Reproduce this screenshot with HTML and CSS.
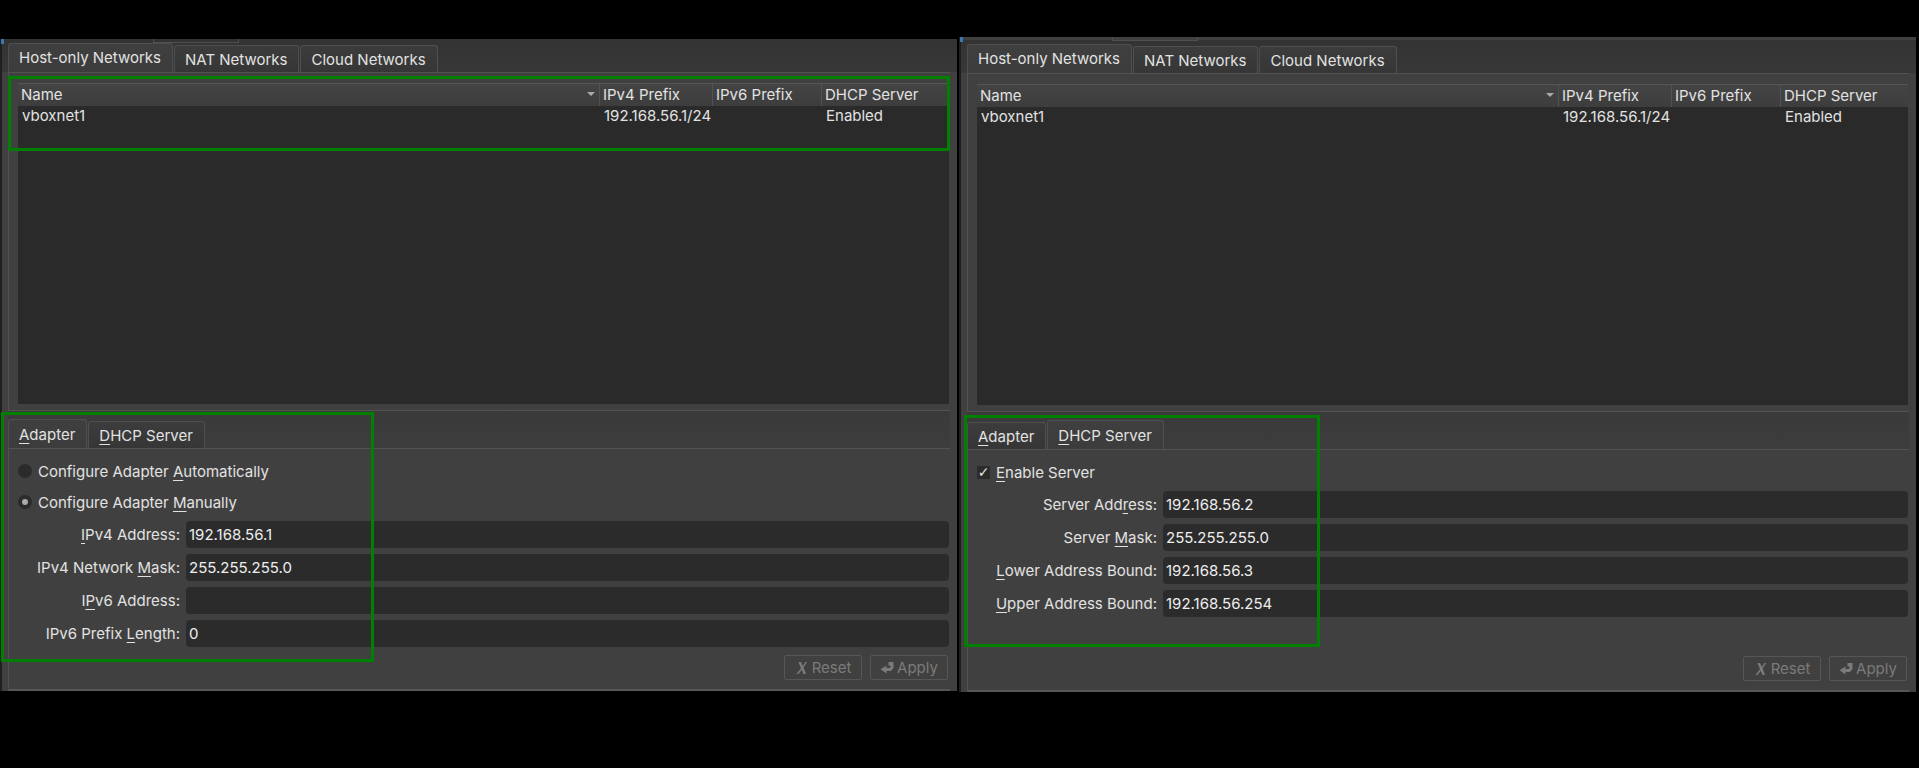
FILE: index.html
```html
<!DOCTYPE html>
<html lang="en">
<head>
<meta charset="utf-8">
<title>Host Network Manager</title>
<link rel="stylesheet" href="styles.css">
</head>
<body>
<main class="desktop">
  <section class="window window-left">
    <div class="top-pane">
      <div class="tabs">
        <div class="tab active">Host-only Networks</div>
        <div class="tab">NAT Networks</div>
        <div class="tab">Cloud Networks</div>
      </div>
      <div class="frame top-frame">
        <div class="table">
          <div class="thead">
            <div class="th th-name">Name<span class="sort"></span></div>
            <div class="th">IPv4 Prefix</div>
            <div class="th">IPv6 Prefix</div>
            <div class="th">DHCP Server</div>
          </div>
          <div class="tr">
            <div class="td">vboxnet1</div>
            <div class="td">192.168.56.1/24</div>
            <div class="td"></div>
            <div class="td">Enabled</div>
          </div>
        </div>
      </div>
    </div>
    <div class="bottom-pane">
      <div class="tabs">
        <div class="tab active"><u>A</u>dapter</div>
        <div class="tab"><u>D</u>HCP Server</div>
      </div>
      <div class="frame bottom-frame">
        <div class="choices">
          <div class="choice"><span class="radio"></span><span>Configure Adapter <u>A</u>utomatically</span></div>
          <div class="choice"><span class="radio checked"></span><span>Configure Adapter <u>M</u>anually</span></div>
        </div>
        <div class="form form-adapter">
          <label class="lbl"><u>I</u>Pv4 Address:</label><div class="input">192.168.56.1</div>
          <label class="lbl">IPv4 Network <u>M</u>ask:</label><div class="input">255.255.255.0</div>
          <label class="lbl">I<u>P</u>v6 Address:</label><div class="input"></div>
          <label class="lbl">IPv6 Prefix <u>L</u>ength:</label><div class="input">0</div>
        </div>
        <div class="actions">
          <div class="btn"><svg class="ico" viewBox="0 0 14 14"><path d="M3.500 1h2.500l1.800 4 2.700-4h1.700L8.500 6.300 11 13H8.400L6.800 8.700 3.400 13H1.500L6 7.300Z"/></svg>Reset</div>
          <div class="btn"><svg class="ico" viewBox="0 0 14 14"><path d="M8.500 1H13.500V7L11 10H6.500V12.500L.5 8.300 6.500 4.500V7H9.500L10.500 6V4.500H8.500Z"/></svg>Apply</div>
        </div>
      </div>
    </div>
    <div class="corner"></div>
    <div class="ghost-tab"></div>
    <div class="mark mark-table"></div>
    <div class="mark mark-adapter"></div>
  </section>

  <section class="window window-right">
    <div class="top-pane">
      <div class="tabs">
        <div class="tab active">Host-only Networks</div>
        <div class="tab">NAT Networks</div>
        <div class="tab">Cloud Networks</div>
      </div>
      <div class="frame top-frame">
        <div class="table">
          <div class="thead">
            <div class="th th-name">Name<span class="sort"></span></div>
            <div class="th">IPv4 Prefix</div>
            <div class="th">IPv6 Prefix</div>
            <div class="th">DHCP Server</div>
          </div>
          <div class="tr">
            <div class="td">vboxnet1</div>
            <div class="td">192.168.56.1/24</div>
            <div class="td"></div>
            <div class="td">Enabled</div>
          </div>
        </div>
      </div>
    </div>
    <div class="bottom-pane">
      <div class="tabs">
        <div class="tab"><u>A</u>dapter</div>
        <div class="tab active"><u>D</u>HCP Server</div>
      </div>
      <div class="frame bottom-frame">
        <div class="choices">
          <div class="choice"><span class="check">✓</span><span><u>E</u>nable Server</span></div>
        </div>
        <div class="form form-dhcp">
          <label class="lbl">Server Add<u>r</u>ess:</label><div class="input">192.168.56.2</div>
          <label class="lbl">Server <u>M</u>ask:</label><div class="input">255.255.255.0</div>
          <label class="lbl"><u>L</u>ower Address Bound:</label><div class="input">192.168.56.3</div>
          <label class="lbl"><u>U</u>pper Address Bound:</label><div class="input">192.168.56.254</div>
        </div>
        <div class="actions">
          <div class="btn"><svg class="ico" viewBox="0 0 14 14"><path d="M3.500 1h2.500l1.800 4 2.700-4h1.700L8.500 6.300 11 13H8.400L6.800 8.700 3.400 13H1.500L6 7.300Z"/></svg>Reset</div>
          <div class="btn"><svg class="ico" viewBox="0 0 14 14"><path d="M8.500 1H13.500V7L11 10H6.500V12.500L.5 8.300 6.500 4.500V7H9.500L10.500 6V4.500H8.500Z"/></svg>Apply</div>
        </div>
      </div>
    </div>
    <div class="corner"></div>
    <div class="ghost-tab"></div>
    <div class="mark mark-dhcp"></div>
  </section>
</main>
</body>
</html>
```
FILE: styles.css
```css
* { box-sizing: border-box; }
html, body { margin: 0; height: 768px; background: #000; overflow: hidden; }
body { font-family: Inter, "Noto Sans", sans-serif; font-size: 15px; color: #e2e2e2; }
u { text-underline-offset: 3px; text-decoration-thickness: 1px; }

.desktop { display: flex; gap: 2px; align-items: flex-start; padding-top: 39px; }
.window { position: relative; width: 957px; height: 652px; background: #404040; padding-left: 6px; padding-right: 7px; display: flex; flex-direction: column; border-left: 2px solid #1f1f1f; }
.window-right { margin-top: -2px; height: 655px; padding-top: 3px; }

.top-pane { height: 372px; display: flex; flex-direction: column; padding-top: 4px; background: linear-gradient(#333, #383838 33px, transparent 33px); margin: 0 -7px 0 -6px; padding-left: 6px; padding-right: 7px; }
.bottom-pane { flex: 1; display: flex; flex-direction: column; padding-top: 8px; background: linear-gradient(#3a3a3a, #3d3d3d 37px, transparent 37px); }

.tabs { display: flex; height: 29px; align-items: flex-end; gap: 1px; }
.tab { height: 27px; padding: 0 11px 0 10px; display: flex; align-items: center; background: linear-gradient(#3c3c3c, #363636); border: 1px solid #4f4f4f; border-bottom: 0; border-radius: 3px 3px 0 0; white-space: pre; }
.tab.active { height: 29px; background: linear-gradient(#3f3f3f, #3c3c3c); padding: 0 11px 1px 10px; }
.bottom-pane .tab.active { padding-bottom: 0; }

.frame { flex: 1; border: 1px solid #525252; background: #404040; }
.top-frame { padding: 10px 1px 6px 9px; border-right: 0; }
.bottom-frame { padding: 11px 1px 0 9px; display: flex; flex-direction: column; border-right: 0; border-bottom: 2px solid #575757; }

.table { height: 100%; background: #2a2a2a; border-top: 1px solid #555; }
.thead, .tr { display: grid; grid-template-columns: 582px 113px 109px 1fr; }
.thead { height: 22px; background: linear-gradient(#444, #3d3d3d); }
.th { position: relative; padding: 0 3px; line-height: 22px; border-right: 1px solid #525252; white-space: nowrap; }
.th:last-child { border-right: 0; }
.sort { position: absolute; right: 4px; top: 8px; width: 0; height: 0; border: 4px solid transparent; border-top: 4px solid #aaa; border-bottom: 0; }
.tr { height: 21px; line-height: 20px; }
.td { padding: 0 4px; }

.choices { display: flex; flex-direction: column; gap: 9px; margin-bottom: 8px; }
.choice { display: flex; align-items: center; gap: 6px; height: 22px; }
.radio { width: 14px; height: 14px; border-radius: 50%; background: #2b2b2b; display: flex; align-items: center; justify-content: center; }
.radio.checked::after { content: ""; width: 6px; height: 6px; border-radius: 50%; background: #aaa; }
.check { width: 13px; height: 13px; background: #2b2b2b; display: flex; align-items: center; justify-content: center; font-family: "DejaVu Sans", sans-serif; font-size: 14px; }

.form { display: grid; grid-auto-rows: 27px; row-gap: 6px; column-gap: 6px; align-items: center; }
.form-adapter { grid-template-columns: 162px 1fr; }
.form-dhcp { grid-template-columns: 180px 1fr; }
.lbl { text-align: right; white-space: pre; }
.input { height: 27px; line-height: 27px; padding: 0 3px; background: #2b2b2b; border-radius: 4px; color: #eee; }

.actions { display: flex; justify-content: flex-end; gap: 8px; margin: auto 1px 9px 0; }
.btn { width: 78px; height: 25px; border: 1px solid #565656; border-radius: 2px; color: #7b7b7b; display: flex; align-items: center; justify-content: center; gap: 3px; }
.ico { width: 14px; height: 14px; fill: #7b7b7b; }

.corner { position: absolute; left: -1px; top: 0; width: 3px; height: 5px; background: #3b78ad; }
.ghost-tab { position: absolute; left: 151px; top: 0; width: 86px; height: 4px; border: 1px solid #4f4f4f; border-top: 0; }

.mark { position: absolute; border: 3px solid #008000; pointer-events: none; }
.mark-table { left: 6px; top: 37px; width: 942px; height: 75px; }
.mark-adapter { left: -1px; top: 373px; width: 373px; height: 250px; }
.mark-dhcp { left: 3px; top: 378px; width: 356px; height: 232px; }
```
